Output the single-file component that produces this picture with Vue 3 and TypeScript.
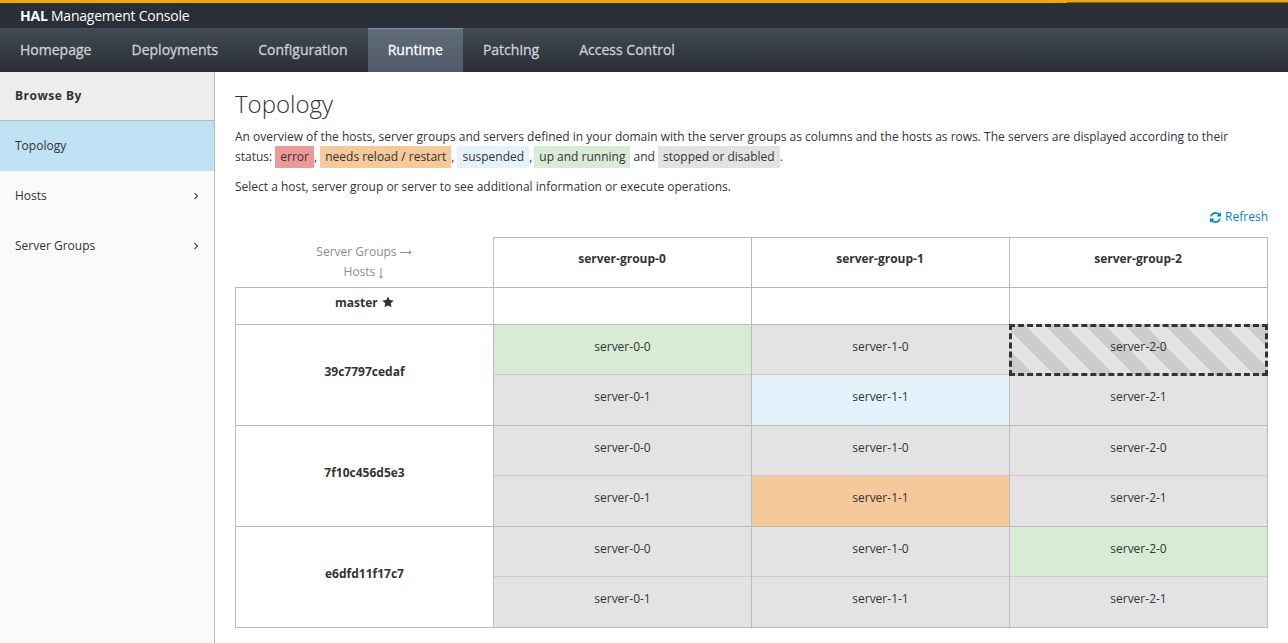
<script setup lang="ts">
type Status = 'ok' | 'suspended' | 'reload' | 'stopped'

interface Server {
  name: string
  status: Status
  selected?: boolean
}

interface Host {
  name: string
  groups: Server[][]
}

const tabs: string[] = ['Homepage', 'Deployments', 'Configuration', 'Runtime', 'Patching', 'Access Control']
const activeTab = 'Runtime'

const groups: string[] = ['server-group-0', 'server-group-1', 'server-group-2']

function servers(special: Record<string, Status>, selected = ''): Server[][] {
  return [0, 1, 2].map((g) =>
    [0, 1].map((s) => {
      const name = `server-${g}-${s}`
      return { name, status: special[name] ?? 'stopped', selected: name === selected }
    }),
  )
}

const hosts: Host[] = [
  { name: '39c7797cedaf', groups: servers({ 'server-0-0': 'ok', 'server-1-1': 'suspended' }, 'server-2-0') },
  { name: '7f10c456d5e3', groups: servers({ 'server-1-1': 'reload' }) },
  { name: 'e6dfd11f17c7', groups: servers({ 'server-2-0': 'ok' }) },
]
</script>

<template>
  <div class="page">
    <header class="masthead">
      <div class="brand"><b>HAL</b> Management Console</div>
      <div class="edge"></div>
      <nav class="tabs">
        <a v-for="tab in tabs" :key="tab" class="tab" :class="{ active: tab === activeTab }">{{ tab }}</a>
      </nav>
    </header>

    <div class="body">
      <aside class="sidebar">
        <div class="side-title">Browse By</div>
        <div class="side-item current">Topology</div>
        <div v-for="item in ['Hosts', 'Server Groups']" :key="item" class="side-item">
          <span>{{ item }}</span>
          <svg class="chevron" width="6" height="8" viewBox="0 0 6 8">
            <path d="M1.600 1.200 L4.500 4.100 L1.600 7" fill="none" stroke="#4a4a4a" stroke-width="1.2" />
          </svg>
        </div>
      </aside>

      <main class="content">
        <h1>Topology</h1>
        <p>
          An overview of the hosts, server groups and servers defined in your domain with the server groups as columns
          and the hosts as rows. The servers are displayed according to their status:
          <span class="label error">error</span>, <span class="label reload">needs reload / restart</span>,
          <span class="label suspended">suspended</span><span class="comma">,</span>
          <span class="label ok">up and running</span> and
          <span class="label stopped">stopped or disabled</span>.
        </p>
        <p>Select a host, server group or server to see additional information or execute operations.</p>

        <div class="actions">
          <a class="refresh">
            <svg width="11" height="11" viewBox="0 0 1536 1536">
              <path
                fill="currentColor"
                d="M1511 928q0 5-1 7-64 268-268 434.500T764 1536q-146 0-282.500-55T238 1324l-129 129q-19 19-45 19t-45-19-19-45V960q0-26 19-45t45-19h448q26 0 45 19t19 45-19 45l-137 137q71 66 161 102t187 36q134 0 250-65t186-179q11-17 53-117 8-23 30-23h192q13 0 22.500 9.500t9.500 22.500zM1536 128v448q0 26-19 45t-45 19h-448q-26 0-45-19t-19-45 19-45l138-138q-148-137-349-137-134 0-250 65T332 500q-11 17-53 117-8 23-30 23H50q-13 0-22.500-9.500T18 608v-7q65-268 270-434.500T768 0q146 0 284 55.500T1297 212l130-129q19-19 45-19t45 19 19 45z"
              />
            </svg>
            <span>Refresh</span>
          </a>
        </div>

        <div class="topology">
          <div class="corner">
            <div>Server Groups
              <svg width="12" height="8" viewBox="0 0 12 8"><path d="M0 3.500H11M9 1.500L11.200 3.500L9 5.500" /></svg>
            </div>
            <div>Hosts
              <svg class="down" width="6" height="11" viewBox="0 0 6 11"><path d="M3 0V10M1 8L3 10.200L5 8" /></svg>
            </div>
          </div>
          <div v-for="g in groups" :key="g" class="group">{{ g }}</div>

          <div class="host master">
            master
            <svg width="12" height="12" viewBox="0 0 24 24">
              <path fill="currentColor" d="M12 .8l3.500 7.200 7.900 1.100-5.700 5.600 1.300 7.900L12 18.900l-7 3.700 1.300-7.900L.6 9.100 8.500 8z" />
            </svg>
          </div>
          <div v-for="g in groups" :key="'m' + g" class="cell"></div>

          <template v-for="host in hosts" :key="host.name">
            <div class="host">{{ host.name }}</div>
            <div v-for="(list, i) in host.groups" :key="i" class="cell">
              <div
                v-for="server in list"
                :key="server.name"
                class="server"
                :class="[server.status, { selected: server.selected }]"
              >{{ server.name }}</div>
            </div>
          </template>
        </div>
      </main>
    </div>
  </div>
</template>

<style>
body {
  background: #fff;
  overflow: hidden;
}
</style>

<style scoped>
.page {
  height: 643px;
  display: flex;
  flex-direction: column;
  overflow: hidden;
  font-family: 'Open Sans', 'Noto Sans', sans-serif;
  font-size: 12px;
  line-height: 20px;
  color: #333;
}
.masthead {
  position: relative;
  flex: none;
  height: 72px;
  box-sizing: border-box;
  border-top: 3px solid #f0ab00;
  background: #2a2e36;
}
.brand {
  height: 25px;
  padding-left: 20px;
  font-size: 14px;
  line-height: 25px;
  letter-spacing: -0.23px;
  color: #fff;
}
.edge {
  position: absolute;
  top: -1px;
  right: 0;
  width: 221px;
  height: 1px;
  background: #82641a;
}
.tabs {
  display: flex;
  height: 44px;
  box-sizing: border-box;
  border-top: 1px solid #47515a;
  background: linear-gradient(#414a53, #2a2d36);
}
.tab {
  margin-top: -1px;
  padding: 0 20px;
  border-top: 1px solid transparent;
  font-size: 14px;
  line-height: 42px;
  letter-spacing: 0.01px;
  -webkit-text-stroke: 0.3px currentColor;
  color: #d1d1d1;
}
.tab.active {
  border-top-color: #7d8d9c;
  background: linear-gradient(#606c79, #505968);
  color: #fff;
}
.body {
  flex: 1;
  display: flex;
}
.sidebar {
  flex: none;
  width: 214px;
  border-right: 1px solid #b8b8bd;
  background: #fafafa;
}
.side-title {
  height: 48px;
  padding-left: 15px;
  border-bottom: 1px solid #b8b8bd;
  background: #ededed;
  font-weight: 700;
  letter-spacing: 0.5px;
  line-height: 48px;
}
.side-item {
  display: flex;
  align-items: center;
  justify-content: space-between;
  height: 50px;
  padding: 0 15px;
}
.side-item.current {
  background: #bee1f4;
}
.content {
  flex: 1;
  padding: 20px 20px 0;
}
h1 {
  margin: 0 0 11px;
  font-size: 24px;
  font-weight: 300;
  line-height: 24px;
}
p {
  margin: 0 0 10px;
}
.label {
  padding: 2px 5px 3px;
}
.comma {
  margin-right: 2px;
}
.error {
  background: #ec9999;
}
.reload {
  background: #f5c999;
}
.suspended {
  background: #e4f3fb;
}
.ok {
  background: #d8ecd5;
}
.stopped {
  background: #e3e3e3;
}
.actions {
  display: flex;
  justify-content: flex-end;
  margin-bottom: 10px;
}
.refresh {
  display: flex;
  align-items: center;
  gap: 4px;
  color: #0088ce;
}
.topology {
  display: grid;
  grid-template-columns: 259px repeat(3, 258px);
  grid-template-rows: 51px 37px repeat(3, 101px);
  text-align: center;
}
.corner,
.group,
.host,
.cell {
  box-sizing: border-box;
  border-right: 1px solid #bbb;
  border-bottom: 1px solid #bbb;
}
.corner {
  padding-top: 5px;
  color: #8b8d8f;
}
.corner svg {
  vertical-align: -1px;
  fill: none;
  stroke: #8b8d8f;
}
.corner .down {
  vertical-align: -3px;
}
.group {
  padding-top: 11px;
  padding-right: 1px;
  border-top: 1px solid #bbb;
  font-weight: 700;
}
.host {
  padding-top: 37px;
  border-left: 1px solid #bbb;
  font-weight: 700;
}
.master {
  padding-top: 5px;
}
.master svg {
  margin-left: 1px;
  vertical-align: -1px;
}
.server {
  position: relative;
  height: 50px;
  box-sizing: border-box;
  padding-top: 12px;
}
.server:first-child {
  border-bottom: 1px solid #ccc;
}
.selected {
  z-index: 1;
}
.selected::after {
  content: '';
  position: absolute;
  z-index: -1;
  inset: -1px -1px -2px -1px;
  border: 3px dashed #333;
  background-color: #e3e3e3;
  background-image: linear-gradient(
    45deg,
    rgba(0, 0, 0, 0.1) 25%,
    transparent 25%,
    transparent 50%,
    rgba(0, 0, 0, 0.1) 50%,
    rgba(0, 0, 0, 0.1) 75%,
    transparent 75%
  );
  background-position: -5px 0;
  background-size: 40px 40px;
}
</style>
